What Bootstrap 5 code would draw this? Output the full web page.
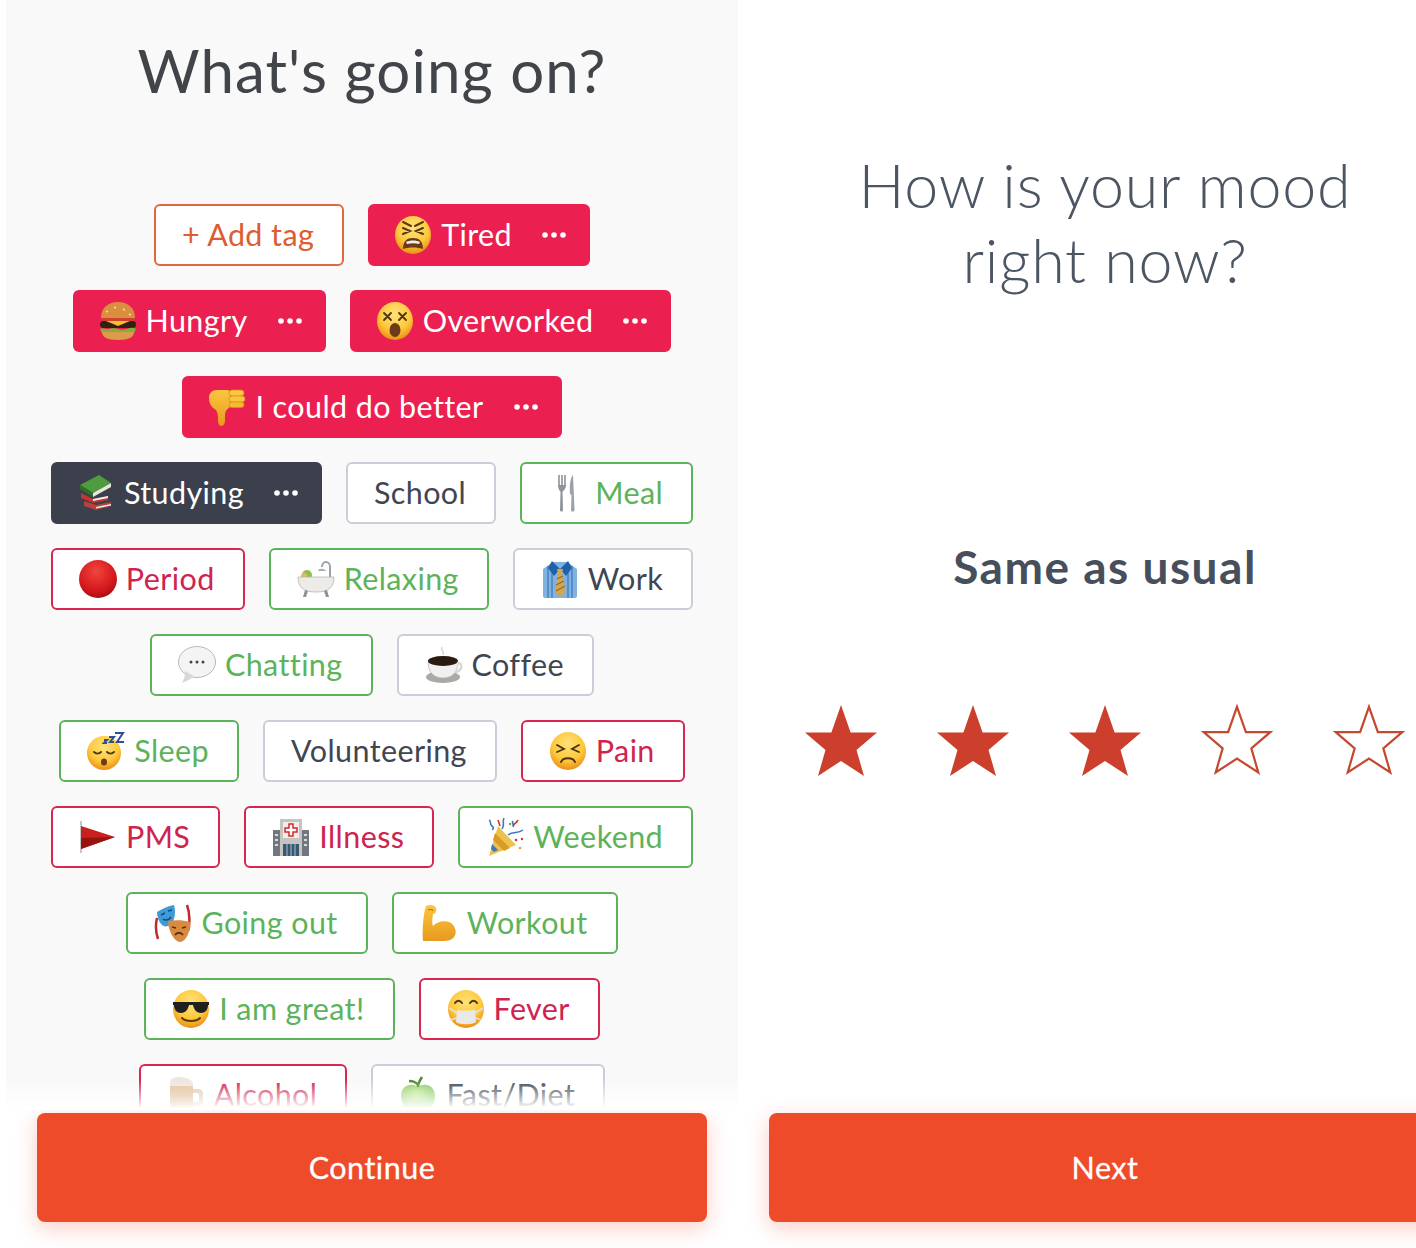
<!DOCTYPE html>
<html lang="en">
<head>
    <meta charset="UTF-8">
    <title>Mood check-in</title>
    <link href="https://cdn.jsdelivr.net/npm/bootstrap@5.3.0/dist/css/bootstrap.min.css" rel="stylesheet">
    <style>
        html, body { height: 100%; overflow: hidden; background: #fff; }
        body { font-family: "Lato", "Liberation Sans", sans-serif; font-variant-ligatures: none; }
        .screens { width: 1472px; height: 1248px; }
        .screen-tags { width: 738px; padding-left: 6px; flex: none; }
        .screen-mood { width: 734px; flex: none; }
        .tags-area { background: #f9f9fa; height: 1110px; overflow: hidden; position: relative; }
        .tags-area::after { content: ""; position: absolute; left: 0; right: 0; bottom: 0; height: 30px;
            background: linear-gradient(rgba(255,255,255,0), #fff 95%); }
        .tags-title { font-size: 60px; font-weight: 400; letter-spacing: 1.1px; color: #414549; line-height: 70px; padding-top: 35px; margin-bottom: 99px; }
        .tag-row { gap: 24px; margin-bottom: 24px; }
        .tag-item { height: 62px; border: 2px solid #c9ced8; border-radius: 6px; background: #fff; color: #3f4651;
            font-size: 30.5px; letter-spacing: .4px; padding: 0 28px 0 26px; gap: 9px; white-space: nowrap; }
        .tag-item svg.emo { width: 38px; height: 38px; flex: none; }
        .tag-green { border-color: #5cb35a; color: #5cb35a; }
        .tag-red { border-color: #d8264f; color: #cf2350; }
        .tag-add { border-color: #e0673f; color: #dd5c30; }
        .tag-on { background: #ec2050; border-color: #ec2050; color: #fff; padding: 0 22px 0 24px; }
        .tag-dark { background: #3b404c; border-color: #3b404c; color: #fff; padding: 0 22px 0 24px; }
        .tag-dots { width: 24px; height: 6px; margin-left: 21px; flex: none; }
        .cta-wrap { padding: 3px 31px 0; }
        .cta-btn { display: block; width: 100%; height: 109px; border: 0; border-radius: 8px; background: #ee4b2b; color: #fff;
            font-size: 30.5px; letter-spacing: .5px; -webkit-text-stroke: .3px #fff; box-shadow: 0 6px 22px rgba(238,75,43,.28); }
        .mood-title { font-size: 61px; font-weight: 300; letter-spacing: .8px; line-height: 75px; color: #4c5562; padding-top: 147px; margin-bottom: 0; }
        .mood-label { font-size: 46px; font-weight: 700; letter-spacing: 1.5px; color: #474f5c; line-height: 54px; margin-top: 243px; }
        .star-row { gap: 58px; margin-top: 110px; margin-bottom: 332px; height: 74px; }
        .star-row svg { width: 74px; height: 74px; flex: none; }
        .svg-defs { position: absolute; width: 0; height: 0; }
    </style>
</head>
<body>
<svg class="svg-defs" aria-hidden="true">
    <defs>
        <radialGradient id="faceFill" cx="50%" cy="32%" r="72%">
            <stop offset="0" stop-color="#ffe27a"/><stop offset=".6" stop-color="#fdc83c"/><stop offset="1" stop-color="#e8860f"/>
        </radialGradient>
        <radialGradient id="ballFill" cx="45%" cy="30%" r="75%">
            <stop offset="0" stop-color="#f2453e"/><stop offset=".7" stop-color="#d2161b"/><stop offset="1" stop-color="#9c0c10"/>
        </radialGradient>
        <linearGradient id="armFill" x1="0" y1="0" x2="0" y2="1">
            <stop offset="0" stop-color="#fbc63f"/><stop offset="1" stop-color="#e79a1e"/>
        </linearGradient>
        <radialGradient id="appleFill" cx="45%" cy="35%" r="70%">
            <stop offset="0" stop-color="#b9e68a"/><stop offset="1" stop-color="#6dbb45"/>
        </radialGradient>
        <linearGradient id="beerFill" x1="0" y1="0" x2="0" y2="1">
            <stop offset="0" stop-color="#e8c9a2"/><stop offset="1" stop-color="#c98a4a"/>
        </linearGradient>
    </defs>
    <symbol id="e-tired" viewBox="0 0 38 38">
        <ellipse cx="19" cy="19" rx="18" ry="19" fill="url(#faceFill)"/>
        <path d="M9 6l8 4M29 6l-8 4M9 12l7 3-7 3M29 12l-7 3 7 3" fill="none" stroke="#5b3a12" stroke-width="2" stroke-linecap="round"/>
        <path d="M9 33c0-8 4-11 10-11s10 3 10 11c-6-2-14-2-20 0z" fill="#6b3b18"/>
        <path d="M12 26c4-2 10-2 14 0l-1 2c-4-1-8-1-12 0z" fill="#eee"/>
    </symbol>
    <symbol id="e-burger" viewBox="0 0 38 38">
        <path d="M2 16C2 5 10 0 19 0s17 5 17 16z" fill="#d98f3d"/>
        <path d="M7 10l2-1M15 6l2-1M24 7l2 1M30 12l2 1" stroke="#f6dca4" stroke-width="1.5"/>
        <path d="M2 16h34l-1 3H3z" fill="#d3402e"/>
        <rect x="1" y="19" width="36" height="7" rx="3.5" fill="#33200f"/>
        <path d="M7 19h24l-12 5z" fill="#f5c02e"/>
        <path d="M1 27c3-2 5 1 9 0s6-1 9 0 6 1 9 0 6-2 9 0l-2 4H3z" fill="#7fb23a"/>
        <path d="M3 30h32c0 5-5 8-16 8S3 35 3 30z" fill="#dd9a4b"/>
    </symbol>
    <symbol id="e-dizzy" viewBox="0 0 38 38">
        <ellipse cx="19" cy="19" rx="18" ry="19" fill="url(#faceFill)"/>
        <path d="M8 11l7 7M15 11l-7 7M23 11l7 7M30 11l-7 7" stroke="#4d3412" stroke-width="1.8" stroke-linecap="round"/>
        <ellipse cx="19" cy="28" rx="5.5" ry="7" fill="#6b3b18"/>
    </symbol>
    <symbol id="e-thumb" viewBox="0 0 38 38">
        <path d="M1 10c0-5 3-8 8-8h10c2 0 3 1 3 3v14c-3 2-5 4-5 8v6c0 3-2 5-4 5s-3-3-3-6c0-4 0-7-2-10-3-2-7-5-7-12z" fill="url(#armFill)"/>
        <rect x="21" y="2" width="15" height="6" rx="3" fill="#fbc63f" stroke="#d98c14" stroke-width=".7"/>
        <rect x="21" y="8" width="16" height="6" rx="3" fill="#fbc63f" stroke="#d98c14" stroke-width=".7"/>
        <rect x="21" y="14" width="15" height="5.5" rx="2.7" fill="#f6b92f" stroke="#d98c14" stroke-width=".7"/>
    </symbol>
    <symbol id="e-books" viewBox="0 0 38 38">
        <path d="M3 11L22 1l12 8-18 10z" fill="#4e9c3f"/>
        <path d="M3 11l13 8v4L3 15z" fill="#2f7029"/>
        <path d="M16 19l18-10v4L16 23z" fill="#e9e6dc"/>
        <path d="M4 19l12 6 15-3v4l-15 3-12-5z" fill="#c9342f"/>
        <path d="M16 25l15-3v2l-15 3z" fill="#eee"/>
        <path d="M7 27l12 4 15-3v4l-15 4-12-4z" fill="#b9403c"/>
        <path d="M19 33l15-3v1.500l-15 3z" fill="#eee"/>
    </symbol>
    <symbol id="e-fork" viewBox="0 0 38 38">
        <path d="M11 1v11M14 1v11M17 1v11" stroke="#8d949c" stroke-width="1.6"/>
        <path d="M10 11c0 4 2 6 2.5 7L12 36c0 2 3 2 3 0l-.5-18c.5-1 3.500-3 3.500-7z" fill="#8d949c"/>
        <path d="M25 1c-3 3-3.500 12-3 19l1.500 1L23 36c0 2 3.500 2 3.500 0z" fill="#9aa1a9"/>
    </symbol>
    <symbol id="e-ball" viewBox="0 0 38 38"><circle cx="19" cy="19" r="19" fill="url(#ballFill)"/></symbol>
    <symbol id="e-bath" viewBox="0 0 38 38">
        <path d="M33 20V7c0-3-2-5-4-5s-4 2-4 5" fill="none" stroke="#9aa1a9" stroke-width="2"/>
        <path d="M21 11c0-3 7-3 8 0z" fill="#a9afb6"/>
        <circle cx="10" cy="15" r="5" fill="#8cc152"/><circle cx="7" cy="16" r="3" fill="#f0b84a"/>
        <path d="M1 17h36c0 10-5 15-18 15S1 27 1 17z" fill="#ecebe8" stroke="#b5b5b2" stroke-width=".8"/>
        <path d="M8 30l-2 7h3l2-6zM30 30l2 7h-3l-2-6z" fill="#8e9298"/>
    </symbol>
    <symbol id="e-shirt" viewBox="0 0 38 38">
        <path d="M2 9l10-7h14l10 7v27c0 1-1 2-2 2H4c-1 0-2-1-2-2z" fill="#7fb2e0"/>
        <path d="M7 6v32M11 6v32M27 6v32M31 6v32" stroke="#3c79b8" stroke-width="1.200"/>
        <path d="M11 1l8 8-6 7-6-8zM27 1l-8 8 6 7 6-8z" fill="#1f62a8"/>
        <path d="M16 9h6l-1 5 3 18-5 5-5-5 3-18z" fill="#d5a54c"/>
        <path d="M16 19l6-3M15 25l8-4M15 31l9-5" stroke="#8a6a32" stroke-width="1.100"/>
    </symbol>
    <symbol id="e-bubble" viewBox="0 0 38 38">
        <ellipse cx="19" cy="16" rx="18.500" ry="15.500" fill="#f4f4f4" stroke="#b8b8b8"/>
        <path d="M7 25c0 5-1 8-3 12 5-2 9-4 12-7z" fill="#d8d8d8"/>
        <circle cx="13" cy="16" r="1.500" fill="#444"/><circle cx="19" cy="16" r="1.500" fill="#444"/><circle cx="25" cy="16" r="1.500" fill="#444"/>
    </symbol>
    <symbol id="e-coffee" viewBox="0 0 38 38">
        <path d="M17 1c-2 3 3 4 1 8" fill="none" stroke="#d6d6d6" stroke-width="1.500"/>
        <ellipse cx="18" cy="31" rx="17" ry="6" fill="#a9a9a6"/>
        <path d="M3 15h30c0 12-6 17-15 17S3 27 3 15z" fill="#f0f0ee" stroke="#aaa" stroke-width=".6"/>
        <ellipse cx="18" cy="15" rx="15" ry="5" fill="#2a1a12"/>
        <path d="M32 17c6-1 6 8-2 9" fill="none" stroke="#d8d8d6" stroke-width="2.500"/>
    </symbol>
    <symbol id="e-sleep" viewBox="0 0 38 38">
        <ellipse cx="17" cy="21" rx="17" ry="17" fill="url(#faceFill)"/>
        <path d="M7 20c2 2 5 2 7 0M20 20c2 2 5 2 7 0" fill="none" stroke="#4d3412" stroke-width="1.800" stroke-linecap="round"/>
        <ellipse cx="17" cy="30" rx="3" ry="3.500" fill="#6b3b18"/>
        <path d="M28 1h8l-6 9h7M22 5h5l-4 5h4M17 8h3l-3 3h3" fill="none" stroke="#2e4f93" stroke-width="2"/>
    </symbol>
    <symbol id="e-pain" viewBox="0 0 38 38">
        <ellipse cx="19" cy="19" rx="18" ry="19" fill="url(#faceFill)"/>
        <path d="M8 13l7 4-7 3M30 13l-7 4 7 3" fill="none" stroke="#4d3412" stroke-width="1.800" stroke-linecap="round"/>
        <path d="M12 30c2-5 12-5 14 0" fill="none" stroke="#4d3412" stroke-width="2" stroke-linecap="round"/>
    </symbol>
    <symbol id="e-flag" viewBox="0 0 38 38">
        <path d="M2 3v32" stroke="#b5b5b5" stroke-width="1.500"/>
        <path d="M2 8l34 11L2 31z" fill="#c9201f"/>
        <path d="M2 20l34-1L2 31z" fill="#96140f"/>
    </symbol>
    <symbol id="e-hospital" viewBox="0 0 38 38">
        <rect x="8" y="1" width="22" height="37" fill="#c4c4c0"/>
        <rect x="1" y="12" width="7" height="26" fill="#70777e"/><rect x="30" y="12" width="7" height="26" fill="#70777e"/>
        <rect x="11" y="4" width="16" height="16" fill="#f3ecec"/>
        <path d="M17 6h4v4h4v4h-4v4h-4v-4h-4v-4h4z" fill="#fff" stroke="#d22a2a" stroke-width="1.500"/>
        <path d="M3 17h3M3 22h3M3 27h3M32 17h3M32 22h3M32 27h3" stroke="#d8dce0" stroke-width="2"/>
        <rect x="11" y="26" width="16" height="12" fill="#39586f"/>
        <path d="M19 26v12M15 26v12M23 26v12" stroke="#a9c0ce"/>
    </symbol>
    <symbol id="e-party" viewBox="0 0 38 38">
        <path d="M12 8l18 19L3 38z" fill="#eec24a"/>
        <path d="M9 15l15 15-6 3L7 22z" fill="#d99a26"/>
        <path d="M6 26l6 6-4 2-3-3z" fill="#3c78c4"/>
        <path d="M16 11c3-4 0-7 2-11M22 17c5-4 10-1 15-5M3 2c3 1 0 4 3 6s0 3 1 4M27 3c-2 3 2 3 0 6" fill="none" stroke="#3c78c4" stroke-width="1.600"/>
        <path d="M12 2l2 6M32 2c-1 3-4 3-5 6" fill="none" stroke="#d2342f" stroke-width="1.600"/>
        <circle cx="30" cy="22" r="1.300" fill="#d2342f"/><circle cx="34" cy="30" r="1.300" fill="#e9a21c"/><circle cx="24" cy="6" r="1.200" fill="#5cb35a"/><circle cx="36" cy="21" r="1.200" fill="#d2342f"/>
    </symbol>
    <symbol id="e-masks" viewBox="0 0 38 38">
        <path d="M3 14c-2 8-1 15 1 21M33 1c3 8 3 20 1 26" fill="none" stroke="#bd2a2a" stroke-width="2.500"/>
        <path d="M3 8c5-3 11-6 17-7 2 6 1 15-3 19-3 3-7 3-9 1C5 18 3 13 3 8z" fill="#3f9ad8"/>
        <path d="M7 11l4-2M14 7l4-1M9 15c2 2 6 1 8-2" fill="none" stroke="#1a4c80" stroke-width="1.600"/>
        <path d="M14 17c7-1 15-1 22 1 1 8-4 20-10 20s-12-12-12-21z" fill="#d98a3f"/>
        <path d="M18 23l4 1M28 24l4-1M21 31c2-3 6-3 8 0" fill="none" stroke="#5f2f10" stroke-width="1.800"/>
    </symbol>
    <symbol id="e-arm" viewBox="0 0 38 38">
        <path d="M6 2c4-2 9-1 10 2s-1 6-3 6c-1 6-1 9 0 12 4-5 13-6 18-3 5 4 6 10 3 14-2 3-6 4-11 4H3c-1-10 0-26 3-35z" fill="url(#armFill)"/>
        <path d="M8 6c2-1 4-1 5 1" fill="none" stroke="#c47f14" stroke-width="1.300"/>
    </symbol>
    <symbol id="e-cool" viewBox="0 0 38 38">
        <ellipse cx="19" cy="19" rx="18" ry="19" fill="url(#faceFill)"/>
        <path d="M1 12h36v3h-1c0 5-3 8-7 8s-7-3-8-8h-4c-1 5-4 8-8 8s-7-3-7-8H1z" fill="#20201f"/>
        <path d="M10 28c4 4 14 4 18 0" fill="none" stroke="#5b3a12" stroke-width="2" stroke-linecap="round"/>
    </symbol>
    <symbol id="e-sick" viewBox="0 0 38 38">
        <ellipse cx="19" cy="19" rx="18" ry="19" fill="url(#faceFill)"/>
        <path d="M8 13c2-3 5-3 7 0M23 13c2-3 5-3 7 0" fill="none" stroke="#4d3412" stroke-width="2" stroke-linecap="round"/>
        <path d="M2 18l8 5M36 18l-8 5M3 30l7-2M35 30l-7-2" stroke="#e2e2e2" stroke-width="1.500"/>
        <path d="M10 20c5 1 13 1 18 0l1 12c-4 3-16 3-20 0z" fill="#e9e9e7"/>
    </symbol>
    <symbol id="e-beer" viewBox="0 0 38 38">
        <rect x="3" y="7" width="23" height="31" rx="3" fill="url(#beerFill)"/>
        <path d="M3 10C1 4 7 0 14 1s13 3 12 9z" fill="#ece7df"/>
        <path d="M26 13h5c3 0 5 2 5 5v7c0 3-2 5-5 5h-5v-4h4c1 0 2-1 2-2v-5c0-1-1-2-2-2h-4z" fill="#d9c6ad"/>
    </symbol>
    <symbol id="e-apple" viewBox="0 0 38 38">
        <path d="M19 11C13 6 2 9 2 20c0 10 8 18 13 18 2 0 3-1 4-1s2 1 4 1c5 0 13-8 13-18 0-11-11-14-17-9z" fill="url(#appleFill)"/>
        <path d="M19 11c0-4 2-7 4-10M19 9C17 6 13 5 10 5" fill="none" stroke="#4f8a2e" stroke-width="2.500"/>
    </symbol>
    <symbol id="e-dots" viewBox="0 0 24 6"><circle cx="3" cy="3" r="2.800" fill="#fff"/><circle cx="12" cy="3" r="2.800" fill="#fff"/><circle cx="21" cy="3" r="2.800" fill="#fff"/></symbol>
    <symbol id="e-star" viewBox="0 0 74 74"><path d="M37 1l9.600 27.500H73L52.500 46l7.500 26-23-15-23 15 7.500-26L1 28.500h26.400z"/></symbol>
    <symbol id="e-star-line" viewBox="-3 -2 80 80"><path d="M37 1l9.600 27.500H73L52.500 46l7.500 26-23-15-23 15 7.500-26L1 28.500h26.400z"/></symbol>
</svg>

<div class="screens d-flex">
    <!-- tags -->
    <div class="screen-tags">
        <div class="tags-area">
            <h1 class="tags-title text-center">What's going on?</h1>

            <div class="tag-row d-flex justify-content-center">
                <div class="tag-item tag-add d-flex align-items-center">+ Add tag</div>
                <div class="tag-item tag-on d-flex align-items-center"><svg class="emo"><use href="#e-tired"/></svg>Tired<svg class="tag-dots"><use href="#e-dots"/></svg></div>
            </div>
            <div class="tag-row d-flex justify-content-center">
                <div class="tag-item tag-on d-flex align-items-center"><svg class="emo"><use href="#e-burger"/></svg>Hungry<svg class="tag-dots"><use href="#e-dots"/></svg></div>
                <div class="tag-item tag-on d-flex align-items-center"><svg class="emo"><use href="#e-dizzy"/></svg>Overworked<svg class="tag-dots"><use href="#e-dots"/></svg></div>
            </div>
            <div class="tag-row d-flex justify-content-center">
                <div class="tag-item tag-on d-flex align-items-center"><svg class="emo"><use href="#e-thumb"/></svg>I could do better<svg class="tag-dots"><use href="#e-dots"/></svg></div>
            </div>
            <div class="tag-row d-flex justify-content-center">
                <div class="tag-item tag-dark d-flex align-items-center"><svg class="emo"><use href="#e-books"/></svg>Studying<svg class="tag-dots"><use href="#e-dots"/></svg></div>
                <div class="tag-item d-flex align-items-center">School</div>
                <div class="tag-item tag-green d-flex align-items-center"><svg class="emo"><use href="#e-fork"/></svg>Meal</div>
            </div>
            <div class="tag-row d-flex justify-content-center">
                <div class="tag-item tag-red d-flex align-items-center"><svg class="emo"><use href="#e-ball"/></svg>Period</div>
                <div class="tag-item tag-green d-flex align-items-center"><svg class="emo"><use href="#e-bath"/></svg>Relaxing</div>
                <div class="tag-item d-flex align-items-center"><svg class="emo"><use href="#e-shirt"/></svg>Work</div>
            </div>
            <div class="tag-row d-flex justify-content-center">
                <div class="tag-item tag-green d-flex align-items-center"><svg class="emo"><use href="#e-bubble"/></svg>Chatting</div>
                <div class="tag-item d-flex align-items-center"><svg class="emo"><use href="#e-coffee"/></svg>Coffee</div>
            </div>
            <div class="tag-row d-flex justify-content-center">
                <div class="tag-item tag-green d-flex align-items-center"><svg class="emo"><use href="#e-sleep"/></svg>Sleep</div>
                <div class="tag-item d-flex align-items-center">Volunteering</div>
                <div class="tag-item tag-red d-flex align-items-center"><svg class="emo"><use href="#e-pain"/></svg>Pain</div>
            </div>
            <div class="tag-row d-flex justify-content-center">
                <div class="tag-item tag-red d-flex align-items-center"><svg class="emo"><use href="#e-flag"/></svg>PMS</div>
                <div class="tag-item tag-red d-flex align-items-center"><svg class="emo"><use href="#e-hospital"/></svg>Illness</div>
                <div class="tag-item tag-green d-flex align-items-center"><svg class="emo"><use href="#e-party"/></svg>Weekend</div>
            </div>
            <div class="tag-row d-flex justify-content-center">
                <div class="tag-item tag-green d-flex align-items-center"><svg class="emo"><use href="#e-masks"/></svg>Going out</div>
                <div class="tag-item tag-green d-flex align-items-center"><svg class="emo"><use href="#e-arm"/></svg>Workout</div>
            </div>
            <div class="tag-row d-flex justify-content-center">
                <div class="tag-item tag-green d-flex align-items-center"><svg class="emo"><use href="#e-cool"/></svg>I am great!</div>
                <div class="tag-item tag-red d-flex align-items-center"><svg class="emo"><use href="#e-sick"/></svg>Fever</div>
            </div>
            <div class="tag-row d-flex justify-content-center">
                <div class="tag-item tag-red d-flex align-items-center"><svg class="emo"><use href="#e-beer"/></svg>Alcohol</div>
                <div class="tag-item d-flex align-items-center"><svg class="emo"><use href="#e-apple"/></svg>Fast/Diet</div>
            </div>
        </div>
        <div class="cta-wrap"><button class="cta-btn" type="button">Continue</button></div>
    </div>

    <!-- mood -->
    <div class="screen-mood text-center">
        <h2 class="mood-title">How is your mood<br>right now?</h2>
        <div class="mood-label">Same as usual</div>
        <div class="star-row d-flex justify-content-center">
            <svg fill="#cb3f2c"><use href="#e-star"/></svg>
            <svg fill="#cb3f2c"><use href="#e-star"/></svg>
            <svg fill="#cb3f2c"><use href="#e-star"/></svg>
            <svg fill="#fff" stroke="#c4492f" stroke-width="2.400"><use href="#e-star-line"/></svg>
            <svg fill="#fff" stroke="#c4492f" stroke-width="2.400"><use href="#e-star-line"/></svg>
        </div>
        <div class="cta-wrap"><button class="cta-btn" type="button">Next</button></div>
    </div>
</div>
<script src="https://cdn.jsdelivr.net/npm/bootstrap@5.3.0/dist/js/bootstrap.bundle.min.js"></script>
</body>
</html>
